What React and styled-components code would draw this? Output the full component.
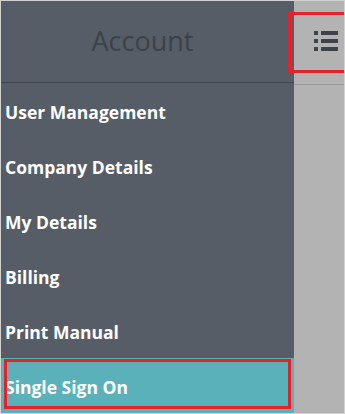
import styled, { createGlobalStyle } from 'styled-components'

const GlobalStyle = createGlobalStyle`
  body {
    margin: 0;
    font-family: 'Open Sans', 'Noto Sans', sans-serif;
  }
`

const items = [
  'User Management',
  'Company Details',
  'My Details',
  'Billing',
  'Print Manual',
  'Single Sign On'
]

const App = () => {
  return (
    <>
      <GlobalStyle />
      <Frame>
        <Sidebar>
          <SidebarHeader>Account</SidebarHeader>
          <Menu>
            {items.map(item => (
              <MenuItem key={item} active={item === 'Single Sign On'}>
                {item}
                {item === 'Single Sign On' && <Highlight $type='item' />}
              </MenuItem>
            ))}
          </Menu>
        </Sidebar>
        <Panel>
          <PanelHeader>
            <ListIcon viewBox='0 0 24 20'>
              <rect x='0' y='0' width='4' height='4' />
              <rect x='7' y='0' width='17' height='4' />
              <rect x='0' y='8' width='4' height='4' />
              <rect x='7' y='8' width='17' height='4' />
              <rect x='0' y='16' width='4' height='4' />
              <rect x='7' y='16' width='17' height='4' />
            </ListIcon>
          </PanelHeader>
        </Panel>
        <Highlight $type='toggle' />
      </Frame>
    </>
  )
}

const Frame = styled.div`
  position: relative;
  display: flex;
  width: 345px;
  height: 414px;
  box-sizing: border-box;
  border: 1px solid #d2d2d2;
  overflow: hidden;
  background: #b3b3b3;
`

const Sidebar = styled.div`
  width: 293px;
  flex-shrink: 0;
  background: #565d66;
  display: flex;
  flex-direction: column;
`

const SidebarHeader = styled.div`
  height: 81px;
  padding: 0 10px 2px 0;
  border-bottom: 1px solid #3f454d;
  display: flex;
  align-items: center;
  justify-content: center;
  font-size: 27px;
  color: #3c424a;
`

const Menu = styled.div`
  display: flex;
  flex-direction: column;
`

const MenuItem = styled.div`
  position: relative;
  height: 55px;
  box-sizing: border-box;
  padding: 3px 0 0 4px;
  flex-shrink: 0;
  display: flex;
  align-items: center;
  font-size: 17.5px;
  font-weight: 700;
  color: #ffffff;
  background: ${p => (p.active ? '#5bb1b9' : 'transparent')};
`

const Panel = styled.div`
  flex: 1;
  display: flex;
  flex-direction: column;
`

const PanelHeader = styled.div`
  height: 83px;
  border-bottom: 1px solid #9a9a9a;
  display: flex;
  align-items: center;
  justify-content: flex-end;
  padding-right: 6px;
`

const ListIcon = styled.svg`
  width: 24px;
  height: 20px;
  fill: #3f4348;
  margin-bottom: 3px;
`

const Highlight = styled.div`
  position: absolute;
  box-sizing: border-box;
  border: 3px solid #e8202a;
  pointer-events: none;
  ${p => p.$type === 'toggle'
    ? 'left: 287px; top: 11px; width: 70px; height: 61px;'
    : 'left: 3px; top: 1px; width: 287px; height: 50px;'}
`

export default App
